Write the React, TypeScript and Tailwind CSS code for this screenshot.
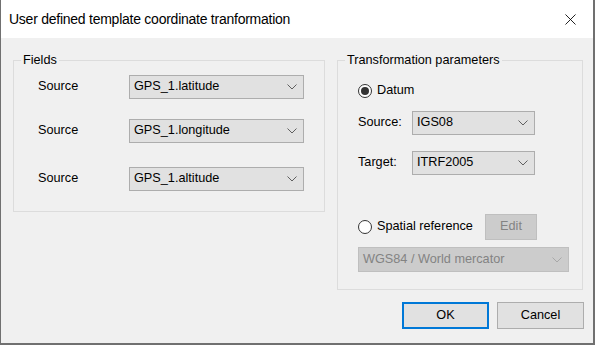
import { X } from "lucide-react";

const font = "font-['Liberation_Sans',Arial,sans-serif]";

function Chevron({ color = "#5f5f5f" }: { color?: string }) {
  return (
    <svg width="10" height="6" viewBox="0 0 10 6" className="shrink-0">
      <polyline points="0.5,0.5 5,5 9.5,0.5" fill="none" stroke={color} strokeWidth="1" />
    </svg>
  );
}

function Select({ value, width, disabled = false, h = "h-[24px]" }: { value: string; width: string; disabled?: boolean; h?: string }) {
  return (
    <div
      className={`${width} ${h} flex items-center justify-between pl-[4px] pr-[6px] border ${
        disabled ? "bg-[#cccccc] border-[#bfbfbf] text-[#838383]" : "bg-[#e1e1e1] border-[#adadad] text-black"
      }`}
    >
      <span>{value}</span>
      <Chevron color={disabled ? "#a8a8a8" : "#5f5f5f"} />
    </div>
  );
}

function Radio({ checked }: { checked: boolean }) {
  return (
    <div className="w-[14px] h-[14px] rounded-full border border-[#333] bg-white flex items-center justify-center shrink-0">
      {checked && <div className="w-[8px] h-[8px] rounded-full bg-[#333]" />}
    </div>
  );
}

function GroupBox({ title, className, children }: { title: string; className: string; children: React.ReactNode }) {
  return (
    <div className={`relative border border-[#dcdcdc] ${className}`}>
      <span className="absolute -top-[9px] left-[7px] px-[2px] bg-[#f0f0f0] leading-[16px]">{title}</span>
      {children}
    </div>
  );
}

export default function App() {
  return (
    <div className={`w-[595px] h-[345px] bg-[#f0f0f0] border-l border-r-2 border-b-2 border-[#707070] flex flex-col text-[12.7px] text-black ${font}`}>
      {/* title bar */}
      <div className="h-[38px] bg-white flex items-center justify-between pl-[8px] pr-[13px] shrink-0">
        <span className="text-[14px] tracking-[-0.25px] text-black">User defined template coordinate tranformation</span>
        <X className="w-[19px] h-[19px] text-black" strokeWidth={1.1} />
      </div>

      <div className="flex pt-[22px] pl-[12px]">
        {/* Fields */}
        <GroupBox title="Fields" className="w-[312px] h-[152px] shrink-0">
          <div className="flex flex-col pl-[24px] pt-[14px]">
            <div className="flex items-center">
              <span className="w-[91px]">Source</span>
              <Select value="GPS_1.latitude" width="w-[175px]" />
            </div>
            <div className="flex items-center mt-[20px]">
              <span className="w-[91px]">Source</span>
              <Select value="GPS_1.longitude" width="w-[175px]" />
            </div>
            <div className="flex items-center mt-[24px]">
              <span className="w-[91px]">Source</span>
              <Select value="GPS_1.altitude" width="w-[175px]" />
            </div>
          </div>
        </GroupBox>

        {/* Transformation parameters */}
        <div className="ml-[12px] flex flex-col">
          <GroupBox title="Transformation parameters" className="w-[246px] h-[230px]">
            <div className="flex flex-col pl-[20px] pt-[22px]">
              <div className="flex items-center gap-[5px] h-[16px]">
                <Radio checked />
                <span>Datum</span>
              </div>
              <div className="flex items-center mt-[12px]">
                <span className="w-[54px]">Source:</span>
                <Select value="IGS08" width="w-[123px]" />
              </div>
              <div className="flex items-center mt-[16px]">
                <span className="w-[54px]">Target:</span>
                <Select value="ITRF2005" width="w-[123px]" />
              </div>
              <div className="flex items-center mt-[39px]">
                <div className="flex items-center gap-[5px] w-[127px]">
                  <Radio checked={false} />
                  <span>Spatial reference</span>
                </div>
                <div className="w-[52px] h-[26px] bg-[#cccccc] border border-[#bfbfbf] text-[#838383] flex items-center justify-center">
                  Edit
                </div>
              </div>
              <div className="mt-[7px]">
                <Select value="WGS84 / World mercator" width="w-[211px]" h="h-[25px]" disabled />
              </div>
            </div>
          </GroupBox>

          <div className="flex justify-end gap-[8px] mt-[12px] mr-[-1px]">
            <button className="w-[87px] h-[27px] bg-[#e1e1e1] border-2 border-[#0078d7] flex items-center justify-center">
              OK
            </button>
            <button className="w-[87px] h-[27px] bg-[#e1e1e1] border border-[#adadad] flex items-center justify-center">
              Cancel
            </button>
          </div>
        </div>
      </div>
    </div>
  );
}
